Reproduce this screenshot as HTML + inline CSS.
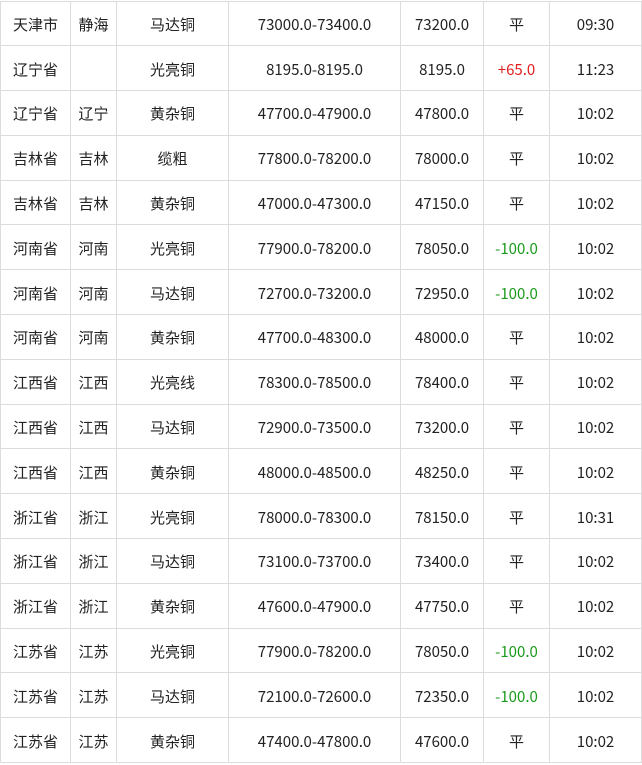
<!DOCTYPE html>
<html><head><meta charset="utf-8"><style>
html,body{margin:0;padding:0;background:#fff;width:642px;height:765px;overflow:hidden}
table{position:absolute;left:0;top:0.5px;border-collapse:collapse;table-layout:fixed;font-family:"Noto Sans CJK SC","Liberation Sans",sans-serif;font-size:15px;color:#222}
tr{height:44.8px}
td{border:1.5px solid #dcdcdc;padding:3px 0 0 0;text-align:center;white-space:nowrap;line-height:20px}
td.l{text-align:left;padding-left:12px}
.r{color:#e02020}.g{color:#1a9a1a}
</style></head><body>
<table>
<colgroup><col style="width:70px"><col style="width:46px"><col style="width:112px"><col style="width:172px"><col style="width:83px"><col style="width:66px"><col style="width:92px"></colgroup>
<tr><td class="l">天津市</td><td>静海</td><td>马达铜</td><td>73000.0-73400.0</td><td>73200.0</td><td>平</td><td>09:30</td></tr>
<tr><td class="l">辽宁省</td><td></td><td>光亮铜</td><td>8195.0-8195.0</td><td>8195.0</td><td class="r">+65.0</td><td>11:23</td></tr>
<tr><td class="l">辽宁省</td><td>辽宁</td><td>黄杂铜</td><td>47700.0-47900.0</td><td>47800.0</td><td>平</td><td>10:02</td></tr>
<tr><td class="l">吉林省</td><td>吉林</td><td>缆粗</td><td>77800.0-78200.0</td><td>78000.0</td><td>平</td><td>10:02</td></tr>
<tr><td class="l">吉林省</td><td>吉林</td><td>黄杂铜</td><td>47000.0-47300.0</td><td>47150.0</td><td>平</td><td>10:02</td></tr>
<tr><td class="l">河南省</td><td>河南</td><td>光亮铜</td><td>77900.0-78200.0</td><td>78050.0</td><td class="g">-100.0</td><td>10:02</td></tr>
<tr><td class="l">河南省</td><td>河南</td><td>马达铜</td><td>72700.0-73200.0</td><td>72950.0</td><td class="g">-100.0</td><td>10:02</td></tr>
<tr><td class="l">河南省</td><td>河南</td><td>黄杂铜</td><td>47700.0-48300.0</td><td>48000.0</td><td>平</td><td>10:02</td></tr>
<tr><td class="l">江西省</td><td>江西</td><td>光亮线</td><td>78300.0-78500.0</td><td>78400.0</td><td>平</td><td>10:02</td></tr>
<tr><td class="l">江西省</td><td>江西</td><td>马达铜</td><td>72900.0-73500.0</td><td>73200.0</td><td>平</td><td>10:02</td></tr>
<tr><td class="l">江西省</td><td>江西</td><td>黄杂铜</td><td>48000.0-48500.0</td><td>48250.0</td><td>平</td><td>10:02</td></tr>
<tr><td class="l">浙江省</td><td>浙江</td><td>光亮铜</td><td>78000.0-78300.0</td><td>78150.0</td><td>平</td><td>10:31</td></tr>
<tr><td class="l">浙江省</td><td>浙江</td><td>马达铜</td><td>73100.0-73700.0</td><td>73400.0</td><td>平</td><td>10:02</td></tr>
<tr><td class="l">浙江省</td><td>浙江</td><td>黄杂铜</td><td>47600.0-47900.0</td><td>47750.0</td><td>平</td><td>10:02</td></tr>
<tr><td class="l">江苏省</td><td>江苏</td><td>光亮铜</td><td>77900.0-78200.0</td><td>78050.0</td><td class="g">-100.0</td><td>10:02</td></tr>
<tr><td class="l">江苏省</td><td>江苏</td><td>马达铜</td><td>72100.0-72600.0</td><td>72350.0</td><td class="g">-100.0</td><td>10:02</td></tr>
<tr><td class="l">江苏省</td><td>江苏</td><td>黄杂铜</td><td>47400.0-47800.0</td><td>47600.0</td><td>平</td><td>10:02</td></tr>
</table>
</body></html>
